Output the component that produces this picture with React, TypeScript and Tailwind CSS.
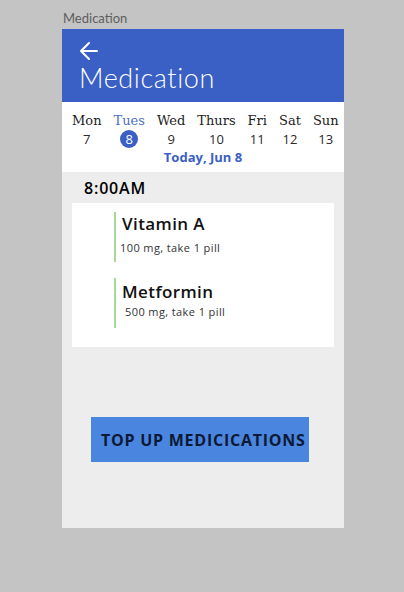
import React from "react";

const days = [
  { name: "Mon", date: 7 },
  { name: "Tues", date: 8 },
  { name: "Wed", date: 9 },
  { name: "Thurs", date: 10 },
  { name: "Fri", date: 11 },
  { name: "Sat", date: 12 },
  { name: "Sun", date: 13 },
];

const meds = [
  { name: "Vitamin A", dose: "100 mg, take 1 pill", titleTop: "pt-[1px]", doseStyle: "mt-[5px] pl-[4px]" },
  { name: "Metformin", dose: "500 mg, take 1 pill", titleTop: "pt-[3px]", doseStyle: "mt-[1px] pl-[9px]" },
];

export default function App() {
  const today = 8;
  return (
    <div className="min-h-[592px] w-[404px] bg-[#c4c4c4] font-['Open_Sans',sans-serif]">
      <div className="pl-[63px] pt-[10px] font-['Lato',sans-serif] text-[13px] leading-[16px] text-[#5e5e5e]">Medication</div>
      <div className="ml-[62px] mt-[3px] flex h-[499px] w-[282px] flex-col bg-[#ededed]">
        <div className="h-[73px] bg-[#3a60c5] pl-[17px] pt-[12px] text-white">
          <svg width="20" height="20" viewBox="0 0 20 20" fill="none" stroke="white" strokeWidth="2" strokeLinecap="round" strokeLinejoin="round">
            <path d="M18 10H2M10 2L2 10l8 8" />
          </svg>
          <div className="mt-[2px] font-['Lato',sans-serif] text-[27px] font-light leading-[30px] tracking-[0.6px]">Medication</div>
        </div>
        <div className="h-[70px] bg-white pt-[10px]">
          <div className="flex gap-[12px] pl-[10px]">
            {days.map((d) => (
              <div key={d.name} className="flex flex-col items-center">
                <span className={"font-['DejaVu_Serif',serif] text-[13px] leading-[18px] " + (d.date === today ? "text-[#4a6fc9]" : "text-[#1c1c1c]")}>
                  {d.name}
                </span>
                {d.date === today ? (
                  <span className="flex h-[18px] w-[18px] items-center justify-center rounded-full bg-[#3a60c5] text-[13px] leading-[18px] text-white">{d.date}</span>
                ) : (
                  <span className="text-[13px] leading-[18px] text-[#2a2a2a]">{d.date}</span>
                )}
              </div>
            ))}
          </div>
          <div className="mt-[1px] text-center text-[13px] font-bold leading-[16px] text-[#3a60c5]">Today, Jun 8</div>
        </div>
        <div className="pl-[22px] pt-[6px] text-[16px] font-semibold leading-[20px] tracking-[0.8px] text-black">8:00AM</div>
        <div className="mx-[10px] mt-[5px] flex h-[144px] flex-col gap-[16px] bg-white pl-[42px] pt-[9px]">
          {meds.map((m) => (
            <div key={m.name} className="h-[50px] border-l-[2px] border-[#a8d89a]">
              <div className={"pl-[6px] text-[17px] font-semibold leading-[22px] tracking-[0.4px] text-[#111] " + m.titleTop}>{m.name}</div>
              <div className={"text-[11px] leading-[15px] tracking-[0.4px] text-[#333] " + m.doseStyle}>{m.dose}</div>
            </div>
          ))}
        </div>
        <div className="ml-[29px] mt-[70px] flex h-[45px] w-[218px] items-center bg-[#4a86e0] pl-[10px]">
          <span className="text-[16px] font-bold leading-[20px] tracking-[0.75px] text-[#0c1a36]">TOP UP MEDICICATIONS</span>
        </div>
      </div>
    </div>
  );
}
